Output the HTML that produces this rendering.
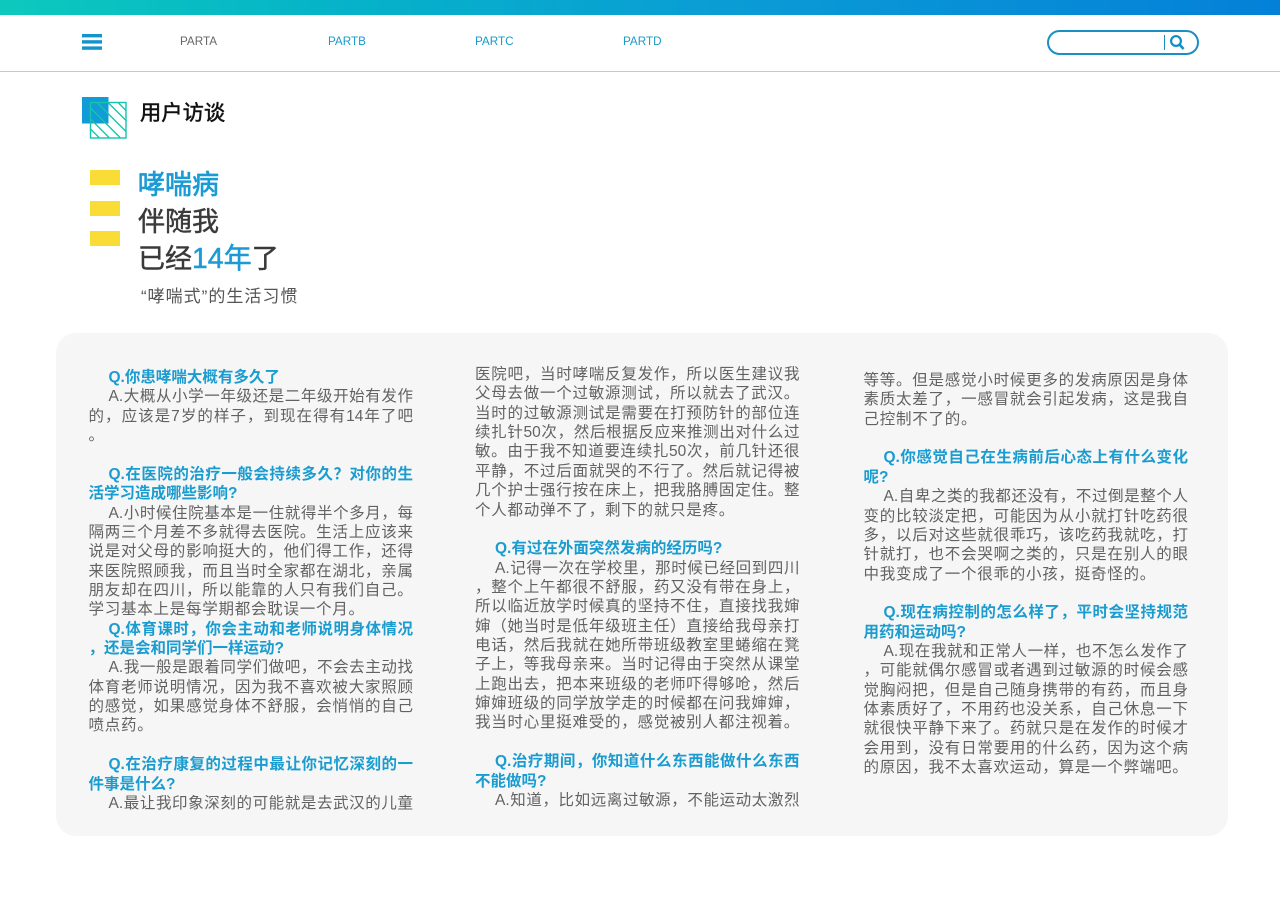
<!DOCTYPE html>
<html lang="zh-CN">
<head>
<meta charset="utf-8">
<title>用户访谈</title>
<style>
*{box-sizing:border-box;margin:0;padding:0}
html,body{width:1280px;height:905px;overflow:hidden;background:#fff}
body{position:relative;font-family:"Liberation Sans","Noto Sans CJK SC",sans-serif}
.abs{position:absolute}
.bar{left:0;top:0;width:1280px;height:15px;background:linear-gradient(90deg,#0cc9bd 0%,#06b4c8 25%,#0a9ad6 60%,#0480d8 100%)}
.rule{left:0;top:71px;width:1280px;height:1px;background:#c9c9c9}
.nav{top:35px;font-size:11.700px;line-height:14px;color:#1a9ac9}
.col{position:absolute;width:324.500px;font-size:15.500px;line-height:19.370px;color:#626262}
.col div{height:19.370px;white-space:nowrap;text-align:justify;text-align-last:justify}
.col div.i{padding-left:20px}
.col div.e{text-align-last:left;letter-spacing:.75px}
.col div.b{text-align-last:left}
.col div.q{color:#1a9cd0;font-weight:700}
.h{left:138px;font-size:27px;line-height:36px;color:#3a3a3a;white-space:nowrap;-webkit-text-stroke:.45px currentColor}
.h span,.h.bl{color:#1a9bd6}
.y{left:90px;width:30px;height:15px;background:#f9dc35}
</style>
</head>
<body>
<div class="abs bar"></div>
<div class="abs rule"></div>

<svg class="abs" style="left:82px;top:33px" width="20" height="18" viewBox="0 0 20 18">
<rect x="0" y="1" width="20" height="3.4" fill="#1593cc"/>
<rect x="0" y="7.2" width="20" height="3.4" fill="#1593cc"/>
<rect x="0" y="13.4" width="20" height="3.4" fill="#1593cc"/>
</svg>
<div class="abs nav" style="left:180px;color:#666">PARTA</div>
<div class="abs nav" style="left:328px">PARTB</div>
<div class="abs nav" style="left:475px">PARTC</div>
<div class="abs nav" style="left:623px">PARTD</div>

<div class="abs" style="left:1047px;top:30px;width:152px;height:25px;border:2px solid #1a8fc2;border-radius:13px;background:#fff"></div>
<div class="abs" style="left:1164px;top:35px;width:1px;height:15px;background:#1a8fc2"></div>
<svg class="abs" style="left:1169px;top:34px" width="16" height="17" viewBox="0 0 16 17">
<circle cx="7" cy="7" r="4.9" fill="none" stroke="#1090c8" stroke-width="2.2"/>
<path d="M10.5 10.5L14.6 15" stroke="#1090c8" stroke-width="2.6" fill="none"/>
</svg>

<svg class="abs" style="left:81px;top:96px" width="47" height="43" viewBox="0 0 47 43">
<rect x="1" y="1" width="26.500" height="26.500" fill="#119cd8"/>
<g stroke="#17c4ab" stroke-width="1.400" fill="none">
<rect x="9.500" y="6.500" width="35.500" height="35.500"/>
<path d="M9.500 12L39.500 42M9.500 23L28.500 42M9.500 33L18.500 42M16 6.500L45 35.500M27 6.500L45 24.500M37 6.500L45 14.500"/>
</g>
</svg>
<div class="abs" style="left:140px;top:99px;font-size:21.300px;line-height:28px;color:#111;white-space:nowrap;-webkit-text-stroke:.5px #111">用户访谈</div>

<div class="abs y" style="top:170px"></div>
<div class="abs y" style="top:201px"></div>
<div class="abs y" style="top:231px"></div>
<div class="abs h bl" style="top:167px;-webkit-text-stroke:.7px #1a9bd6">哮喘病</div>
<div class="abs h" style="top:204px">伴随我</div>
<div class="abs h" style="top:240px">已经<span style="font-size:28.300px">14年</span>了</div>
<div class="abs" style="left:141px;top:286px;font-size:17px;letter-spacing:1px;line-height:22px;color:#555;white-space:nowrap">“哮喘式”的生活习惯</div>

<div class="abs" style="left:56px;top:333px;width:1172px;height:503px;background:#f6f6f6;border-radius:20px"></div>

<div class="col" style="left:88.500px;top:368px">
<div class="q i b">Q.你患哮喘大概有多久了</div>
<div class="i">A.大概从小学一年级还是二年级开始有发作</div>
<div>的，应该是7岁的样子，到现在得有14年了吧</div>
<div class="b">。</div>
<div class="b"></div>
<div class="q i">Q.在医院的治疗一般会持续多久？对你的生</div>
<div class="q b">活学习造成哪些影响?</div>
<div class="i">A.小时候住院基本是一住就得半个多月，每</div>
<div>隔两三个月差不多就得去医院。生活上应该来</div>
<div>说是对父母的影响挺大的，他们得工作，还得</div>
<div>来医院照顾我，而且当时全家都在湖北，亲属</div>
<div class="e">朋友却在四川，所以能靠的人只有我们自己。</div>
<div class="e">学习基本上是每学期都会耽误一个月。</div>
<div class="q i">Q.体育课时，你会主动和老师说明身体情况</div>
<div class="q b">，还是会和同学们一样运动?</div>
<div class="i">A.我一般是跟着同学们做吧，不会去主动找</div>
<div>体育老师说明情况，因为我不喜欢被大家照顾</div>
<div>的感觉，如果感觉身体不舒服，会悄悄的自己</div>
<div class="e">喷点药。</div>
<div class="b"></div>
<div class="q i">Q.在治疗康复的过程中最让你记忆深刻的一</div>
<div class="q b">件事是什么?</div>
<div class="i">A.最让我印象深刻的可能就是去武汉的儿童</div>
</div>

<div class="col" style="left:475px;top:365px">
<div>医院吧，当时哮喘反复发作，所以医生建议我</div>
<div class="e">父母去做一个过敏源测试，所以就去了武汉。</div>
<div>当时的过敏源测试是需要在打预防针的部位连</div>
<div>续扎针50次，然后根据反应来推测出对什么过</div>
<div>敏。由于我不知道要连续扎50次，前几针还很</div>
<div>平静，不过后面就哭的不行了。然后就记得被</div>
<div>几个护士强行按在床上，把我胳膊固定住。整</div>
<div class="e">个人都动弹不了，剩下的就只是疼。</div>
<div class="b"></div>
<div class="q i b">Q.有过在外面突然发病的经历吗?</div>
<div class="i">A.记得一次在学校里，那时候已经回到四川</div>
<div>，整个上午都很不舒服，药又没有带在身上，</div>
<div>所以临近放学时候真的坚持不住，直接找我婶</div>
<div>婶（她当时是低年级班主任）直接给我母亲打</div>
<div>电话，然后我就在她所带班级教室里蜷缩在凳</div>
<div>子上，等我母亲来。当时记得由于突然从课堂</div>
<div>上跑出去，把本来班级的老师吓得够呛，然后</div>
<div>婶婶班级的同学放学走的时候都在问我婶婶，</div>
<div class="e">我当时心里挺难受的，感觉被别人都注视着。</div>
<div class="b"></div>
<div class="q i">Q.治疗期间，你知道什么东西能做什么东西</div>
<div class="q b">不能做吗?</div>
<div class="i">A.知道，比如远离过敏源，不能运动太激烈</div>
</div>

<div class="col" style="left:863.500px;top:371px">
<div>等等。但是感觉小时候更多的发病原因是身体</div>
<div>素质太差了，一感冒就会引起发病，这是我自</div>
<div class="e">己控制不了的。</div>
<div class="b"></div>
<div class="q i">Q.你感觉自己在生病前后心态上有什么变化</div>
<div class="q b">呢?</div>
<div class="i">A.自卑之类的我都还没有，不过倒是整个人</div>
<div>变的比较淡定把，可能因为从小就打针吃药很</div>
<div>多，以后对这些就很乖巧，该吃药我就吃，打</div>
<div>针就打，也不会哭啊之类的，只是在别人的眼</div>
<div class="e">中我变成了一个很乖的小孩，挺奇怪的。</div>
<div class="b"></div>
<div class="q i">Q.现在病控制的怎么样了，平时会坚持规范</div>
<div class="q b">用药和运动吗?</div>
<div class="i">A.现在我就和正常人一样，也不怎么发作了</div>
<div>，可能就偶尔感冒或者遇到过敏源的时候会感</div>
<div>觉胸闷把，但是自己随身携带的有药，而且身</div>
<div>体素质好了，不用药也没关系，自己休息一下</div>
<div>就很快平静下来了。药就只是在发作的时候才</div>
<div>会用到，没有日常要用的什么药，因为这个病</div>
<div class="e">的原因，我不太喜欢运动，算是一个弊端吧。</div>
</div>
</body>
</html>
